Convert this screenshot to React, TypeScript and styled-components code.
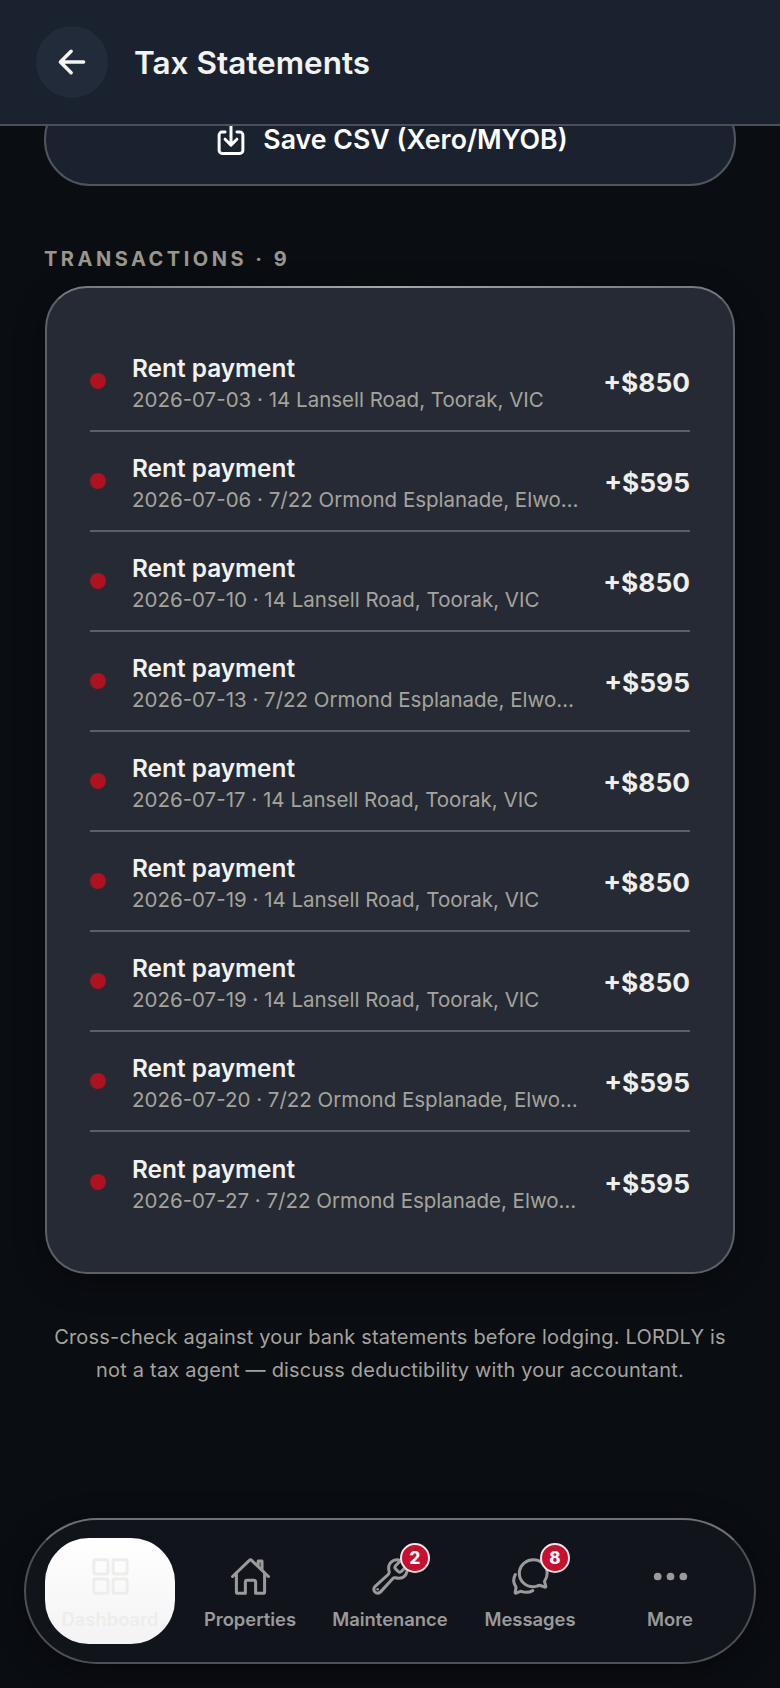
import React from 'react';
import styled, { createGlobalStyle } from 'styled-components';
import {
  IoArrowBack,
  IoBuildOutline,
  IoChatbubblesOutline,
  IoDownloadOutline,
  IoEllipsisHorizontal,
  IoGridOutline,
  IoHomeOutline,
} from 'react-icons/io5';

const GlobalStyle = createGlobalStyle`
  html, body {
    margin: 0;
    padding: 0;
    background: #0a0d12;
  }
  * {
    box-sizing: border-box;
  }
`;

const Screen = styled.div`
  position: relative;
  width: 780px;
  height: 1688px;
  overflow: hidden;
  display: flex;
  flex-direction: column;
  background: #0a0d12;
  font-family: Inter, "Liberation Sans", sans-serif;
`;

const Header = styled.header`
  position: relative;
  z-index: 2;
  flex: none;
  height: 126px;
  display: flex;
  align-items: center;
  gap: 26px;
  padding: 0 36px;
  background: #1a2230;
  border-bottom: 2px solid #4b5058;
`;

const BackButton = styled.button`
  width: 72px;
  height: 72px;
  display: flex;
  align-items: center;
  justify-content: center;
  padding: 0;
  border: 0;
  border-radius: 50%;
  background: #222b39;
  color: #f4f4f2;
`;

const Title = styled.h1`
  margin: 0;
  font-size: 31.5px;
  font-weight: 600;
  color: #f2f2f0;
`;

const Content = styled.main`
  flex: 1;
  margin-top: -33px;
  padding: 0 45px;
`;

const SaveButton = styled.button`
  width: 692px;
  height: 93px;
  margin-left: -1px;
  display: flex;
  align-items: center;
  justify-content: center;
  gap: 13px;
  padding: 0 0 2px;
  border: 2px solid #4f545d;
  border-radius: 46px;
  background: #1a2230;
  color: #ffffff;
  font-family: inherit;
  font-size: 26.7px;
  font-weight: 600;

  svg {
    margin: 2px 0 4px;
  }

  svg path {
    stroke-width: 40px;
  }
`;

const SectionLabel = styled.div`
  margin: 61px 0 15px -1px;
  font-size: 20px;
  line-height: 24px;
  font-weight: 700;
  letter-spacing: 3.5px;
  color: #99978d;
`;

const Card = styled.section`
  position: relative;
  width: 690px;
  height: 988px;
  padding: 44px 43px 0 43px;
  border: 2px solid #5c6068;
  border-top-color: #777a80;
  border-radius: 42px;
  background: #252a34;
  box-shadow: 0 8px 30px rgba(0, 0, 0, 0.35);

  &::before {
    content: '';
    position: absolute;
    top: -2px;
    left: 40px;
    right: 40px;
    height: 2px;
    background: linear-gradient(90deg, #777a80, #a5a6a8 50%, #777a80);
  }
`;

const Row = styled.div`
  height: 100px;
  display: flex;
  align-items: center;
  border-bottom: 2px solid #5b5f66;

  &:last-child {
    border-bottom: 0;
  }
`;

const Dot = styled.span`
  flex: none;
  width: 16px;
  height: 16px;
  margin-right: 26px;
  border-radius: 50%;
  background: #ae1220;
`;

const RowText = styled.div`
  flex: 1;
  min-width: 0;
  padding-top: 3px;
`;

const RowTitle = styled.div`
  font-size: 24.4px;
  line-height: 32px;
  font-weight: 600;
  color: #f2f2f0;
`;

const RowMeta = styled.div`
  margin-top: 2px;
  font-size: 20.5px;
  line-height: 28px;
  color: #a5a49c;
  white-space: nowrap;
  overflow: hidden;
  text-overflow: ellipsis;
`;

const Amount = styled.div`
  flex: none;
  margin-left: 21px;
  padding-top: 3px;
  font-size: 26.3px;
  font-weight: 700;
  color: #eeeeec;
`;

const Disclaimer = styled.p`
  margin: 47px 0 0;
  font-size: 20px;
  line-height: 33px;
  text-align: center;
  letter-spacing: 0.2px;
  color: #a5a49c;
`;

const Nav = styled.nav`
  position: absolute;
  left: 24px;
  bottom: 24px;
  width: 732px;
  height: 146px;
  display: flex;
  align-items: center;
  padding: 0 14px;
  border: 2px solid #4d5056;
  border-top-color: #6f7175;
  border-radius: 73px;
  background: #11151b;
  box-shadow: 0 6px 30px rgba(0, 0, 0, 0.4);
`;

const NavItem = styled.div<{ $active?: boolean }>`
  position: relative;
  flex: none;
  width: ${({ $active }) => ($active ? '130px' : '140px')};
  height: 106px;
  margin: ${({ $active }) => ($active ? '0 5px' : '0')};
  display: flex;
  flex-direction: column;
  align-items: center;
  padding-top: 18px;
  gap: 11px;
  font-size: 18.4px;
  line-height: 22px;
  font-weight: 600;
  color: ${({ $active }) => ($active ? '#eeedeb' : '#9a9a9a')};
  border-radius: ${({ $active }) => ($active ? '44px' : '0')};
  background: ${({ $active }) => ($active ? 'linear-gradient(#ffffff, #f3f3f5)' : 'transparent')};

  svg {
    flex: none;
  }

  svg path,
  svg rect {
    stroke-width: 38px;
  }
`;

const Badge = styled.span`
  position: absolute;
  top: 5px;
  left: 80px;
  width: 30px;
  height: 30px;
  display: flex;
  align-items: center;
  justify-content: center;
  border: 2px solid #f4e6e8;
  border-radius: 50%;
  background: #c8102e;
  color: #ffffff;
  font-size: 17px;
  font-weight: 800;
`;

const rows = [
  ['2026-07-03', '14 Lansell Road, Toorak, VIC', '+$850'],
  ['2026-07-06', '7/22 Ormond Esplanade, Elwood, VIC', '+$595'],
  ['2026-07-10', '14 Lansell Road, Toorak, VIC', '+$850'],
  ['2026-07-13', '7/22 Ormond Esplanade, Elwood, VIC', '+$595'],
  ['2026-07-17', '14 Lansell Road, Toorak, VIC', '+$850'],
  ['2026-07-19', '14 Lansell Road, Toorak, VIC', '+$850'],
  ['2026-07-19', '14 Lansell Road, Toorak, VIC', '+$850'],
  ['2026-07-20', '7/22 Ormond Esplanade, Elwood, VIC', '+$595'],
  ['2026-07-27', '7/22 Ormond Esplanade, Elwood, VIC', '+$595'],
];

export default function App() {
  return (
    <Screen>
      <GlobalStyle />
      <Header>
        <BackButton aria-label="Back">
          <IoArrowBack size={38} />
        </BackButton>
        <Title>Tax Statements</Title>
      </Header>
      <Content>
        <SaveButton>
          <IoDownloadOutline size={38} />
          Save CSV (Xero/MYOB)
        </SaveButton>
        <SectionLabel>TRANSACTIONS · 9</SectionLabel>
        <Card>
          {rows.map(([date, place, amount], i) => (
            <Row key={i}>
              <Dot />
              <RowText>
                <RowTitle>Rent payment</RowTitle>
                <RowMeta>{date} · {place}</RowMeta>
              </RowText>
              <Amount>{amount}</Amount>
            </Row>
          ))}
        </Card>
        <Disclaimer>
          Cross-check against your bank statements before lodging. LORDLY is not a tax agent — discuss deductibility with your accountant.
        </Disclaimer>
      </Content>
      <Nav>
        <NavItem $active>
          <IoGridOutline size={41} />
          Dashboard
        </NavItem>
        <NavItem>
          <IoHomeOutline size={41} />
          Properties
        </NavItem>
        <NavItem>
          <IoBuildOutline size={41} />
          Maintenance
          <Badge>2</Badge>
        </NavItem>
        <NavItem>
          <IoChatbubblesOutline size={41} />
          Messages
          <Badge>8</Badge>
        </NavItem>
        <NavItem>
          <IoEllipsisHorizontal size={41} />
          More
        </NavItem>
      </Nav>
    </Screen>
  );
}
